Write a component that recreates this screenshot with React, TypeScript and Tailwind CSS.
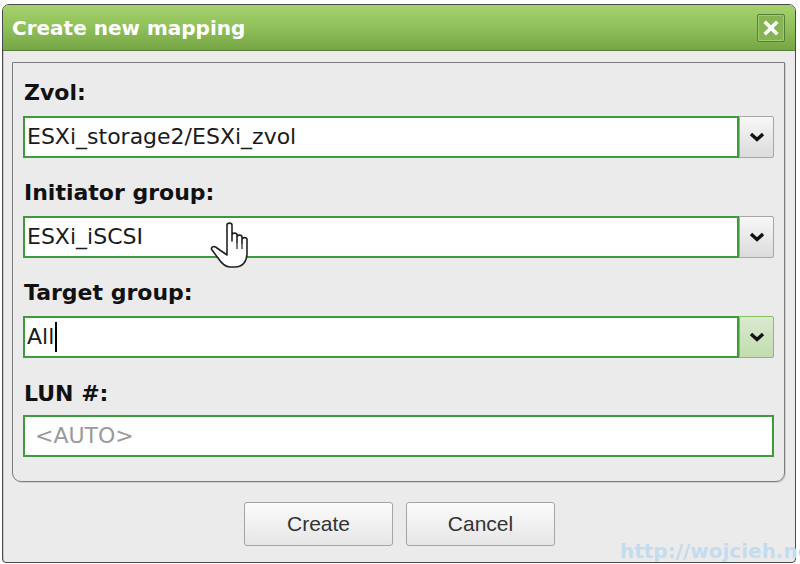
import React from "react";

const sans = { fontFamily: '"DejaVu Sans", Verdana, sans-serif' };

function Chevron() {
  return (
    <svg width="16" height="10" viewBox="0 0 16 10">
      <path d="M2 2 L8 7.5 L14 2" fill="none" stroke="#111" strokeWidth="3.4" strokeLinejoin="miter" />
    </svg>
  );
}

function Label({ text, tall = false }: { text: string; tall?: boolean }) {
  return (
    <div className={`${tall ? "h-[58px]" : "h-[53px]"} flex items-end pb-[12px] pl-[1px] text-[22px] font-bold text-[#111] leading-none`}>
      {text}
    </div>
  );
}

function Select({ value, active = false, caret = false }: { value: string; active?: boolean; caret?: boolean }) {
  return (
    <div className="h-[42px] flex">
      <div className="flex-1 relative border-2 border-[#3d9b3d] bg-white flex items-center pl-[2px] text-[22px] text-[#1a1a1a] leading-none">
        <span>{value}</span>
        {caret && <span className="inline-block w-[2px] h-[30px] bg-black ml-[1px]" />}
      </div>
      <div
        className={`w-[35px] flex items-center justify-center border rounded-r-[2px] ${
          active
            ? "border-[#86c25a] bg-gradient-to-b from-[#d9ead0] to-[#c2dcae]"
            : "border-[#a6a6a6] bg-gradient-to-b from-[#f7f7f7] to-[#dcdcdc]"
        }`}
      >
        <Chevron />
      </div>
    </div>
  );
}

export default function App() {
  return (
    <div className="w-[800px] h-[564px] bg-white relative overflow-hidden pl-[2px] pt-[4px]" style={sans}>
      <div className="w-[794px] h-[559px] border border-[#4a4a4a] rounded-t-[7px] rounded-b-[4px] bg-[#ebebeb] flex flex-col overflow-hidden shadow-[inset_1px_0_0_#c8c8c8]">
        {/* title bar */}
        <div className="h-[46px] shrink-0 bg-gradient-to-b from-[#a6d26e] via-[#8fc05a] to-[#77a545] border-b border-[#5b7f3a] flex items-center justify-between pl-[9px] pr-[10px]">
          <span className="text-[20px] font-bold text-white leading-none pt-[1px]">Create new mapping</span>
          <div className="w-[28px] h-[28px] border border-[#557f36] rounded-[2px] bg-[#86b452] flex items-center justify-center shadow-[inset_0_0_0_1px_#9fcb70]">
            <svg width="16" height="16" viewBox="0 0 16 16">
              <path d="M3 3 L13 13 M13 3 L3 13" stroke="#fff" strokeWidth="3.6" strokeLinecap="square" />
            </svg>
          </div>
        </div>

        {/* fieldset panel */}
        <div className="mt-[11px] ml-[9px] mr-[10px] h-[420px] border border-[#7c7c7c] rounded-b-[9px] px-[10px] shadow-[1px_1px_0_#d0d0d0]">
          <Label text="Zvol:" />
          <Select value="ESXi_storage2/ESXi_zvol" />
          <Label text="Initiator group:" tall />
          <Select value="ESXi_iSCSI" />
          <Label text="Target group:" tall />
          <Select value="All" active caret />
          <div className="h-[57px] flex items-end pb-[10px] pl-[1px] text-[22px] font-bold text-[#111] leading-none">LUN #:</div>
          <div className="h-[42px] border-2 border-[#3d9b3d] bg-white flex items-center pl-[10px] text-[22px] text-[#9a9a9a] leading-none">
            &lt;AUTO&gt;
          </div>
        </div>

        {/* buttons */}
        <div className="flex-1 flex justify-center items-start pt-[20px] gap-[13px] pl-[1px]">
          {["Create", "Cancel"].map((b) => (
            <button
              key={b}
              className="w-[149px] h-[44px] border border-[#a4a4a4] rounded-[3px] bg-gradient-to-b from-[#fbfbfb] to-[#e6e6e6] text-[21px] text-[#333] flex items-center justify-center"
              style={{ fontFamily: '"Liberation Sans", Arial, sans-serif' }}
            >
              {b}
            </button>
          ))}
        </div>
      </div>

      {/* pointer cursor */}
      <svg className="absolute left-[208px] top-[221px]" width="48" height="50" viewBox="0 0 48 50">
        <path
          d="M19 4 C19 1.5 24 1.5 24 4 L24 20 L24 14 C24 11.5 29 11.5 29 14 L29 21 L29 16 C29 13.5 34 13.5 34 16 L34 22 L34 18.5 C34 16 39 16 39 18.5 L39 32 C39 40 35 46 27 46 L22 46 C17 46 14 43 10 37 L4 29 C2.5 27 5 24.5 7.5 26 L19 34 Z"
          fill="#fff"
          stroke="#222"
          strokeWidth="1.6"
          strokeLinejoin="round"
        />
        <path d="M29 21 L29 28 M34 22 L34 28" stroke="#222" strokeWidth="1.2" />
      </svg>

      {/* watermark */}
      <div className="absolute left-[620px] top-[541px] text-[20px] font-bold leading-none text-[#c4dcef] whitespace-nowrap">
        http://wojcieh.net
      </div>
    </div>
  );
}
